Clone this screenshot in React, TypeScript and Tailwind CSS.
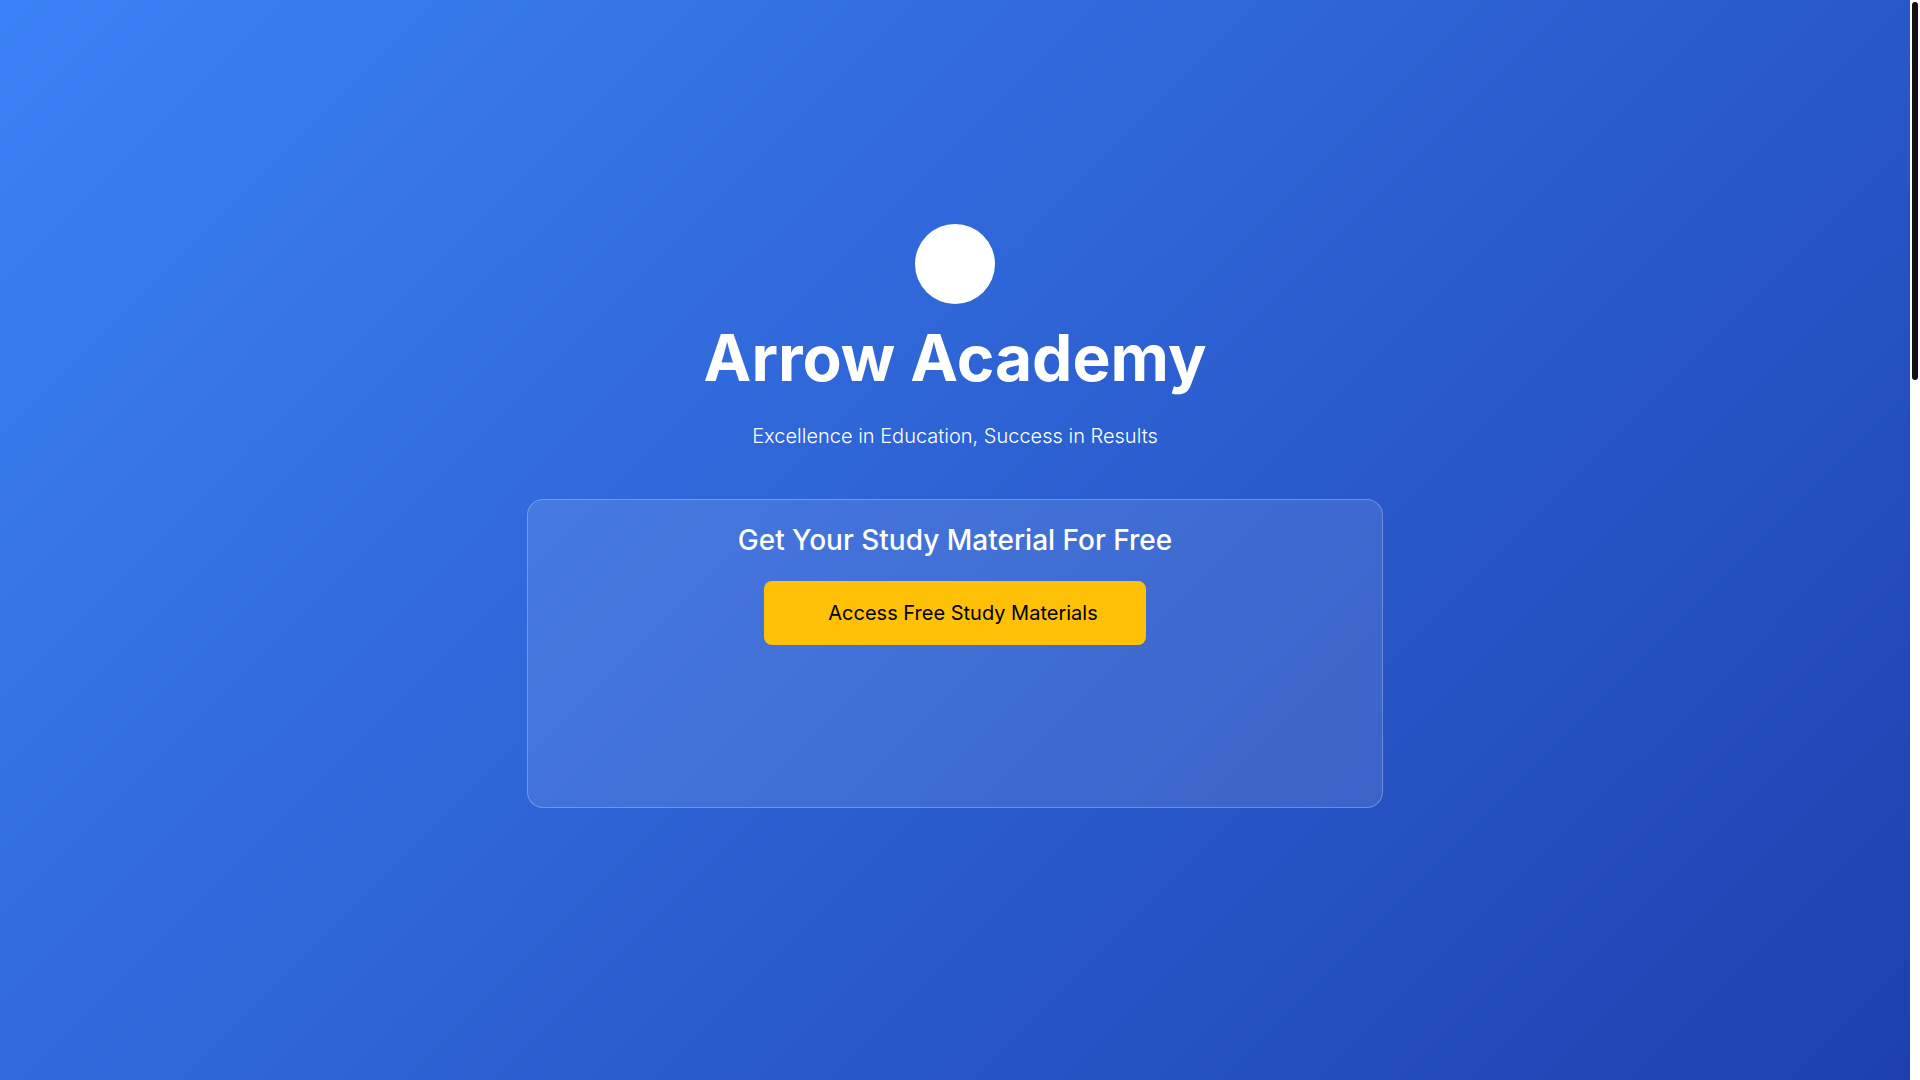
const Hero = () => {
  return (
    <main className="flex flex-1 items-center justify-center bg-[linear-gradient(135deg,#3b82f6_0%,#1e40af_100%)] px-5 pb-12 text-white">
      <div className="flex w-full max-w-[856px] flex-col items-center text-center">
        {/* LOGO */}
        <div className="size-20 rounded-full bg-white" />
        <h1 className="mt-4 text-[64px] leading-[76px] font-bold">Arrow Academy</h1>
        <p className="mt-6 text-xl leading-8 font-light">
          Excellence in Education, Success in Results
        </p>
        {/* STUDY MATERIAL CARD */}
        <section className="mt-[47px] flex min-h-[309px] w-full flex-col items-center rounded-2xl border border-white/25 bg-white/10 px-6 pt-6">
          <h2 className="text-[28px] leading-8 font-medium">Get Your Study Material For Free</h2>
          <button
            type="button"
            className="mt-[25px] h-16 cursor-pointer rounded-lg bg-[#ffc107] pr-12 pl-16 text-xl text-black"
          >
            Access Free Study Materials
          </button>
        </section>
      </div>
    </main>
  );
};

const App = () => {
  return (
    <div className="flex min-h-screen bg-white font-['Inter',sans-serif]">
      <Hero />
      {/* SCROLL TRACK */}
      <div className="w-2.5 shrink-0 p-0.5" aria-hidden="true">
        <div className="h-[35vh] w-1.5 rounded-full bg-[#111111]" />
      </div>
    </div>
  );
};

export default App;
